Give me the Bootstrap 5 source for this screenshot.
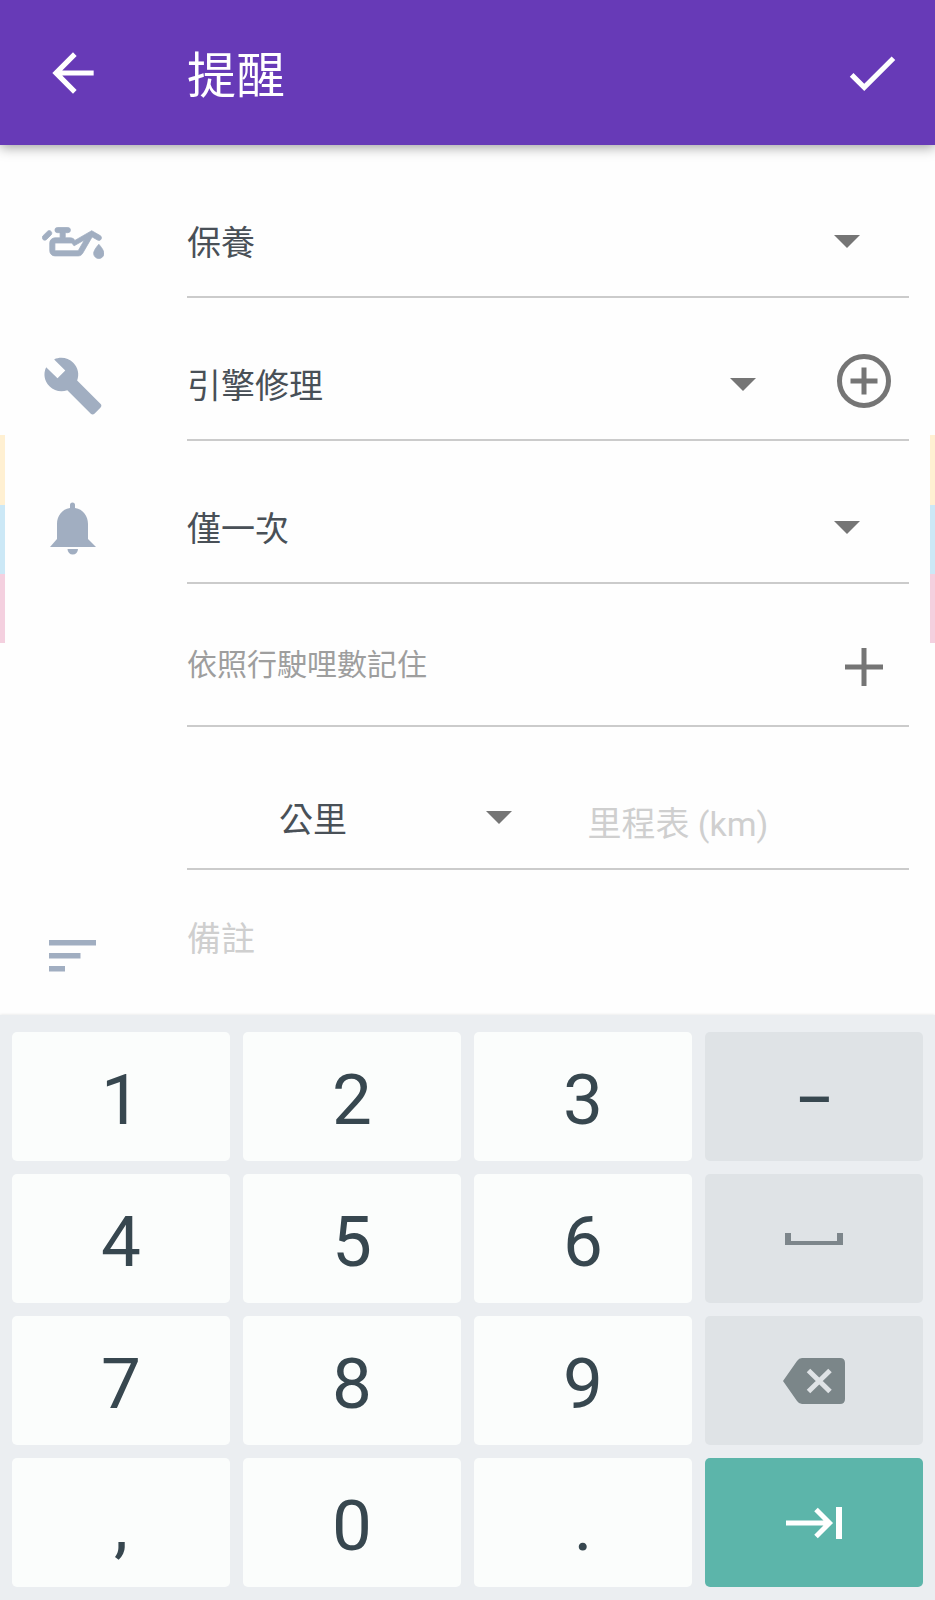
<!DOCTYPE html>
<html lang="zh-Hant">
<head>
<meta charset="utf-8">
<meta name="viewport" content="width=device-width, initial-scale=1">
<title>提醒</title>
<link href="https://cdn.jsdelivr.net/npm/bootstrap@5.3.0/dist/css/bootstrap.min.css" rel="stylesheet">
<style>
  body { font-family: Roboto, "Noto Sans CJK TC", sans-serif; background: #fefefe; color: #495057; }
  .app-bar { height: 145px; background: #673ab7; box-shadow: 0 2px 12px rgba(0,0,0,.4); z-index: 1; padding-right: 28px; }
  .app-bar h1 { font-size: 49px; line-height: 60px; padding-top: 9px; }
  .lead-cell { flex: 0 0 187px; padding-left: 42px; color: #a1aec1; }
  .glyph { width: 62px; height: 62px; display: block; fill: currentColor; }
  .bare { border: 0; background: none; padding: 0; border-radius: 0; color: inherit; }
  .reminder-form {
    padding: 10px 26px 0 0;
    background:
      linear-gradient(#fff0d2 0 70px, #cce8f6 70px 139px, #f4d0df 139px) left 290px / 5px 208px no-repeat,
      linear-gradient(#fff0d2 0 70px, #cce8f6 70px 139px, #f4d0df 139px) right 290px / 5px 208px no-repeat;
  }
  .form-line { height: 143px; }
  .form-line .lead-cell { padding-top: 57px; }
  .field { border-bottom: 2px solid #cbcbcb; min-width: 0; }
  .picker {
    appearance: none; outline: 0; font-size: 34px; min-width: 0; padding: 35px 90px 0 0;
    background: url("data:image/svg+xml,%3Csvg xmlns='http://www.w3.org/2000/svg' width='26' height='13'%3E%3Cpath d='M0 0H26L13 13Z' fill='%23757575'/%3E%3C/svg%3E") right 49px top 80px no-repeat;
  }
  .unit-picker { flex: 0 0 52%; padding: 45px 90px 0 92px; background-position: right 50px top 84px; }
  .side-btn { flex: 0 0 91px; color: #757575; }
  .add-item { margin-left: 13px; }
  .by-distance { font-size: 30px; color: #9e9e9e; padding-top: 19px; }
  .entry { font-size: 34px; outline: 0; }
  .entry::placeholder { color: #cfcfcf; opacity: 1; }
  .odometer { padding: 53px 0 0 25px; }
  .note { resize: none; line-height: 50px; padding: 44px 0 0; }
  .note-line { height: 145px; }
  .keypad { display: grid; grid-template-columns: repeat(4, 1fr); grid-auto-rows: 1fr; gap: 13px; padding: 17px 12px 13px; background: #ebeef1; box-shadow: 0 0 3px rgba(0,0,0,.12); }
  .key { border: 0; border-radius: 5px; background: #fbfdfc; color: #37474f; font-size: 71px; line-height: 84px; padding: 6px 0 0; min-height: 100px; }
  .key-alt { background: #dfe3e6; }
  .key-dash { font-size: 58px; font-weight: 500; }
  .key-icon { padding: 0; display: flex; align-items: center; justify-content: center; color: #7d868b; }
  .key-next { background: #5cb5aa; color: #fff; }
</style>
</head>
<body class="d-flex flex-column min-vh-100">
<header class="app-bar d-flex align-items-center text-white position-relative">
  <div class="lead-cell text-white">
    <button class="bare d-block" type="button" aria-label="返回"><svg class="glyph" viewBox="0 0 24 24"><path d="M20 11H7.83l5.59-5.59L12 4l-8 8 8 8 1.41-1.41L7.83 13H20z"/></svg></button>
  </div>
  <h1 class="m-0 fw-normal flex-grow-1">提醒</h1>
  <button class="bare me-1" type="button" aria-label="完成"><svg class="glyph" viewBox="0 0 24 24"><path d="M9 16.17L4.83 12l-1.42 1.41L9 19 21 7l-1.41-1.41z"/></svg></button>
</header>

<form class="reminder-form">
  <div class="form-line d-flex">
    <div class="lead-cell"><svg class="glyph" viewBox="0 0 24 24" stroke="currentColor" stroke-width=".3"><path d="M22 12.5S24 14.67 24 16a2 2 0 0 1-4 0C20 14.67 22 12.5 22 12.5M6 6H10a1 1 0 0 1 0 2H9V10H11C11.74 10 12.39 10.4 12.73 11L19.24 7.24 22.5 9.13C23 9.4 23.14 10 22.87 10.5 22.59 10.97 22 11.14 21.5 10.86L19.4 9.65 15.75 15.97C15.41 16.58 14.75 17 14 17H5A2 2 0 0 1 3 15V12A2 2 0 0 1 5 10H7V8H6A1 1 0 0 1 6 6M5 12V15H14L16.43 10.8 12.4 13.11 11.57 12H5M.38 9.21L2.09 7.5C2.5 7.11 3.11 7.11 3.5 7.5 3.89 7.89 3.89 8.5 3.5 8.91L1.79 10.62C1.4 11 .77 11 .38 10.62 0 10.23 0 9.6.38 9.21Z"/></svg></div>
    <div class="field d-flex flex-grow-1">
      <select class="picker bare flex-grow-1" aria-label="類型"><option>保養</option></select>
    </div>
  </div>
  <div class="form-line d-flex">
    <div class="lead-cell"><svg class="glyph" viewBox="0 0 24 24"><path d="M22.7 19l-9.1-9.1c.9-2.3.4-5-1.5-6.9-2-2-5-2.4-7.4-1.3L9 6 6 9 1.6 4.7C.4 7.1.9 10.1 2.9 12.1c1.9 1.9 4.6 2.4 6.9 1.5l9.1 9.1c.4.4 1 .4 1.4 0l2.3-2.3c.5-.4.5-1.1.1-1.4z"/></svg></div>
    <div class="field d-flex flex-grow-1">
      <select class="picker bare flex-grow-1" aria-label="項目"><option>引擎修理</option></select>
      <button class="side-btn add-item bare d-flex align-items-center justify-content-center pt-4" type="button" aria-label="新增項目"><svg width="56" height="56" viewBox="0 0 56 56" fill="none" stroke="currentColor" stroke-width="5"><circle cx="28" cy="28" r="24.5"/><path d="M28 14.500V41.500M14.500 28H41.500"/></svg></button>
    </div>
  </div>
  <div class="form-line d-flex">
    <div class="lead-cell"><svg class="glyph" viewBox="0 0 62 62"><path d="M28 10V7a2.500 2.500 0 0 1 5 0v3C41 11 46 18 46 26V41L54 49H8L15 41V26C15 18 20 11 28 10ZM25.500 51h10.500a5.250 5.500 0 0 1-10.500 0Z"/></svg></div>
    <div class="field d-flex flex-grow-1">
      <select class="picker bare flex-grow-1" aria-label="頻率"><option>僅一次</option></select>
    </div>
  </div>
  <div class="form-line d-flex">
    <div class="lead-cell"></div>
    <div class="field d-flex align-items-center flex-grow-1">
      <span class="by-distance flex-grow-1">依照行駛哩數記住</span>
      <button class="side-btn bare d-flex justify-content-center pt-4" type="button" aria-label="新增里程提醒"><svg width="38" height="38" viewBox="0 0 38 38" fill="none" stroke="currentColor" stroke-width="5"><path d="M19 0V38M0 19H38"/></svg></button>
    </div>
  </div>
  <div class="form-line d-flex">
    <div class="lead-cell"></div>
    <div class="field d-flex flex-grow-1">
      <select class="picker unit-picker bare" aria-label="單位"><option>公里</option></select>
      <input class="entry odometer bare flex-grow-1 w-25" type="text" inputmode="numeric" placeholder="里程表 (km)" aria-label="里程表 (km)">
    </div>
  </div>
  <div class="form-line note-line d-flex">
    <div class="lead-cell"><svg class="glyph" viewBox="0 0 62 62"><path d="M7 13H54V18.500H7ZM7 26H38.500V31.500H7ZM7 39H23V44.500H7Z"/></svg></div>
    <textarea class="entry note bare flex-grow-1" placeholder="備註" aria-label="備註"></textarea>
  </div>
</form>

<section class="keypad flex-grow-1" aria-label="數字鍵盤">
  <button class="key" type="button">1</button>
  <button class="key" type="button">2</button>
  <button class="key" type="button">3</button>
  <button class="key key-alt key-dash" type="button">–</button>
  <button class="key" type="button">4</button>
  <button class="key" type="button">5</button>
  <button class="key" type="button">6</button>
  <button class="key key-alt key-icon" type="button" aria-label="空格"><svg width="58" height="12" viewBox="0 0 58 12" fill="currentColor"><path d="M0 0H6V8H52V0H58V12H0Z"/></svg></button>
  <button class="key" type="button">7</button>
  <button class="key" type="button">8</button>
  <button class="key" type="button">9</button>
  <button class="key key-alt key-icon" type="button" aria-label="刪除"><svg width="62" height="46" viewBox="0 0 62 46"><path d="M19 0H57Q62 0 62 5V41Q62 46 57 46H19Q16 46 14 43L0 23 14 3Q16 0 19 0Z" fill="#7b8689"/><path d="M25.500 12.500L47 33.500M47 12.500L25.500 33.500" stroke="#dfe3e6" stroke-width="5"/></svg></button>
  <button class="key" type="button">,</button>
  <button class="key" type="button">0</button>
  <button class="key" type="button">.</button>
  <button class="key key-next key-icon" type="button" aria-label="下一個"><svg width="56" height="32" viewBox="0 0 56 32" fill="none" stroke="currentColor" stroke-width="5"><path d="M0 16H42M30 2.500L43.500 16 30 29.500"/><path d="M53 0V32" stroke-width="6"/></svg></button>
</section>
<script src="https://cdn.jsdelivr.net/npm/bootstrap@5.3.0/dist/js/bootstrap.bundle.min.js"></script>
</body>
</html>
